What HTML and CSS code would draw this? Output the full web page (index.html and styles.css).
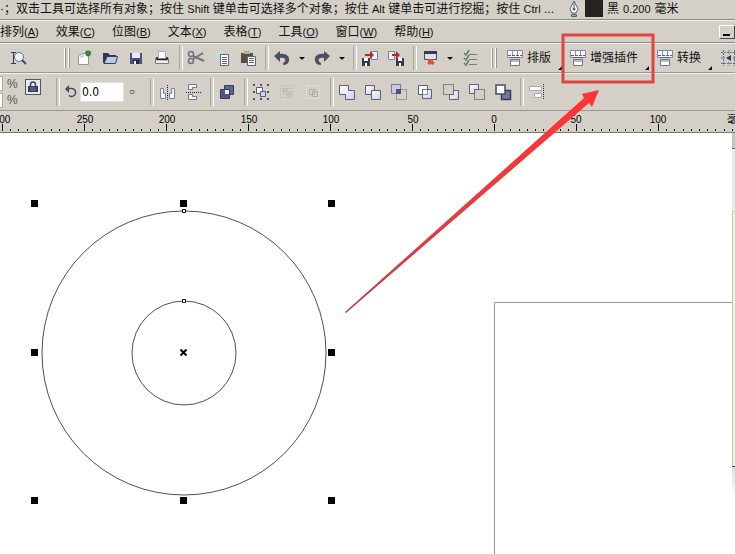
FILE: index.html
```html
<!DOCTYPE html>
<html lang="zh-CN">
<head>
<meta charset="utf-8">
<title>绘图窗口</title>
<link rel="stylesheet" href="styles.css">
</head>
<body>
<svg class="defs" aria-hidden="true">
  <defs>
    <linearGradient id="face" x1="0" y1="0" x2="1" y2="1"><stop offset="0" stop-color="#fff"/><stop offset="1" stop-color="#ccd0e6"/></linearGradient>
    <symbol id="macro" viewBox="0 0 18 18">
      <path d="M1.500 1.500h15v7h-15z" fill="#f6f6fb" stroke="#8488a0"/>
      <path d="M6.500 2v4M11.500 2v4" stroke="#8a8ea6"/>
      <path d="M2 6.500h14" stroke="#555b7a" stroke-dasharray="3 1"/>
      <path d="M4 8.500h10" stroke="#5d627e"/>
      <path d="M4.500 10.500h9v6h-9z" fill="#fff" stroke="#70748c"/>
      <path d="M5 11h8v2H5z" fill="#b9bccb"/>
    </symbol>
  </defs>
</svg>
<div class="app">
  <header class="status">
    <span class="hint">·；双击工具可选择所有对象；按住 <span class="latin">Shift</span> 键单击可选择多个对象；按住 <span class="latin">Alt</span> 键单击可进行挖掘；按住 <span class="latin">Ctrl</span> ...</span>
    <span class="outline">
      <svg class="pen" viewBox="0 0 12 18"><path d="M6 1L2 9l2 4h4l2-4z" fill="#fff" stroke="#596078"/><path d="M6 2v7" stroke="#596078"/><circle cx="6" cy="9" r="1.500" fill="#596078"/><path d="M3.500 14.500h5v2h-5z" fill="#8ba0cc" stroke="#596078"/></svg>
      <span class="swatch"></span><span>黑</span><span class="latin">0.200</span><span>毫米</span>
    </span>
  </header>

  <nav class="menu">
    <button>排列<span class="latin">(<u>A</u>)</span></button><button>效果<span class="latin">(<u>C</u>)</span></button><button>位图<span class="latin">(<u>B</u>)</span></button><button>文本<span class="latin">(<u>X</u>)</span></button><button>表格<span class="latin">(<u>T</u>)</span></button><button>工具<span class="latin">(<u>O</u>)</span></button><button>窗口<span class="latin">(<u>W</u>)</span></button><button>帮助<span class="latin">(<u>H</u>)</span></button>
    <button class="minimize" aria-label="最小化"></button>
  </nav>

  <div class="bar standard">
    <button class="tool zoom" aria-label="缩放"><svg viewBox="0 0 18 18"><path d="M2 3.500h5M2 14.500h5M4.500 4v10" stroke="#333a50" fill="none"/><circle cx="10" cy="8" r="4.500" fill="#eef2fa" stroke="#6c7184"/><path d="M13 11l4 4" stroke="#444a5c" stroke-width="2"/></svg></button>
    <span class="grip"></span>
    <button class="tool" aria-label="新建"><svg viewBox="0 0 18 18"><path d="M3.500 7.500l4-3h6v11h-10z" fill="#fff" stroke="#8f94a0"/><path d="M5 8h3V5" fill="none" stroke="#aeb2bd"/><path d="M10 3c2-2 6-2 6 1s-2 4-5 3z" fill="#358b35"/></svg></button>
    <button class="tool" aria-label="打开"><svg viewBox="0 0 18 18"><path d="M2 14V4h5l2 2h6v3" fill="#30374f"/><path d="M3 14.500l3-7h10.500l-2 7z" fill="#b8cde3" stroke="#35405e"/></svg></button>
    <button class="tool" aria-label="保存"><svg viewBox="0 0 18 18"><path d="M3 4h12v11H3z" fill="#4c517c"/><path d="M5 4h8v5H5z" fill="#e8ebf6"/><path d="M6 11h6v4H6z" fill="#242a45"/><path d="M7 12h2v3H7z" fill="#fff"/></svg></button>
    <button class="tool" aria-label="打印"><svg viewBox="0 0 18 18"><path d="M2.500 9.500h13v5h-13z" fill="#efefea" stroke="#777b85"/><path d="M5.500 2.500h7v7h-7z" fill="#fff" stroke="#aaa"/><path d="M4 8v2.500h10V8" fill="none" stroke="#222" stroke-width="1.500"/></svg></button>
    <span class="sep"></span>
    <button class="tool" aria-label="剪切"><svg viewBox="0 0 18 18" fill="none" stroke="#70737e"><circle cx="4" cy="5" r="2.500" stroke-width="1.500"/><circle cx="4" cy="12" r="2.500" stroke-width="1.500"/><path d="M6 7l11 5M6 10l10-6" stroke-width="2"/></svg></button>
    <button class="tool" aria-label="复制"><svg viewBox="0 0 18 18"><path d="M3 3h8v9H3z" fill="#c5d9dd"/><path d="M7.500 5.500h8v11h-8z" fill="#fff" stroke="#5c6480"/><path d="M9 8.500h5M9 10.500h5M9 12.500h5M9 14.500h5" stroke="#5a6788"/></svg></button>
    <button class="tool" aria-label="粘贴"><svg viewBox="0 0 18 18"><path d="M2 4h12v10H2z" fill="#5c4e42"/><path d="M5 2h6v3H5z" fill="#b8ad8c"/><path d="M8.500 7.500h8v9h-8z" fill="#fff" stroke="#5c6480"/><path d="M10 9.500h5M10 11.500h5M10 13.500h5" stroke="#5a6788"/></svg></button>
    <span class="sep"></span>
    <button class="tool" aria-label="撤消"><svg viewBox="0 0 18 18"><path d="M1 7l6-5v3c6-1 10 2 9 7-1 3-3 4-6 4v-2c4-2 3-6-3-5v4z" fill="#4b5163"/></svg></button>
    <button class="drop" aria-label="撤消列表"></button>
    <button class="tool" aria-label="重做"><svg viewBox="0 0 18 18"><path d="M17 7l-6-5v3C5 4 1 7 2 12c1 3 3 4 6 4v-2C4 12 5 8 11 9v4z" fill="#4b5163"/></svg></button>
    <button class="drop" aria-label="重做列表"></button>
    <span class="sep"></span>
    <button class="tool" aria-label="导入"><svg viewBox="0 0 18 18"><path d="M10.500 2.500h6v8h-6z" fill="#edf1f8" stroke="#7d8498"/><path d="M4 5h5V2l4 4-4 4V7H4z" fill="#bd2430"/><path d="M1 9h8v8H1z" fill="#333a58"/><path d="M3 9h4v3H3zM4 14h2v3H4z" fill="#fff"/></svg></button>
    <button class="tool" aria-label="导出"><svg viewBox="0 0 18 18"><path d="M1.500 2.500h6v8h-6z" fill="#edf1f8" stroke="#7d8498"/><path d="M5 5h4V2l4 4-4 4V7H5z" fill="#bd2430"/><path d="M9 9h8v8H9z" fill="#333a58"/><path d="M11 9h4v3h-4zM12 14h2v3h-2z" fill="#fff"/></svg></button>
    <span class="sep"></span>
    <button class="tool" aria-label="应用程序启动器"><svg viewBox="0 0 18 18"><path d="M3.500 2.500h12v8h-12z" fill="#d9e2f2" stroke="#454b62"/><path d="M3 2h13v3H3z" fill="#343a54"/><path d="M7 10h5v3h2l-2 3-2-1-2 1-2-3h1z" fill="#e2512d"/></svg></button>
    <button class="drop" aria-label="启动器列表"></button>
    <button class="tool" aria-label="选项"><svg viewBox="0 0 18 18" fill="none"><path d="M8 5.500h8M8 10.500h8M8 15.500h8" stroke="#747983"/><path d="M3 4l2 2 3-5M3 9l2 2 3-5M3 14l2 2 3-5" stroke="#58885b" stroke-width="1.500"/></svg></button>
    <span class="grip wide"></span>
    <button class="plugin"><svg><use href="#macro"/></svg>排版</button>
    <button class="plugin"><svg><use href="#macro"/></svg>增强插件</button>
    <button class="plugin"><svg><use href="#macro"/></svg>转换</button>
    <button class="tool snap" aria-label="网格"><svg viewBox="0 0 18 18"><path d="M1 3.500h16M1 14.500h16M3.500 1v16M14.500 1v16M9 1v4M9 13v4M1 9h4M13 9h4" fill="none" stroke="#697086" stroke-dasharray="2 1"/><path d="M6 9l5-3v6z" fill="#343c58"/></svg></button>
  </div>

  <div class="bar property">
    <div class="scale"><input aria-label="水平缩放"><input aria-label="垂直缩放"></div>
    <div class="percent"><span>%</span><span>%</span></div>
    <button class="lock" aria-label="锁定比率"><svg viewBox="0 0 14 14"><path d="M4.500 7V4.500a2.500 2.500 0 0 1 5 0V7" fill="none" stroke="#42475f" stroke-width="1.500"/><path d="M2 6h10v6H2z" fill="#353a56"/><path d="M4 8h6M4 10h6" stroke="#7d83a5"/></svg></button>
    <span class="sep tall"></span>
    <label class="angle"><svg viewBox="0 0 14 14"><path d="M5 3.500h3a4 4 0 1 1-3 7" fill="none" stroke="#444b5d" stroke-width="1.500"/><path d="M1 4l4-4v8z" fill="#444b5d"/></svg><input aria-label="旋转角度" value="0.0"><span>○</span></label>
    <span class="sep tall"></span>
    <button class="tool" aria-label="水平镜像"><svg viewBox="0 0 18 18"><path d="M2.500 5.500h3v5h2v5h-5zM16.500 5.500h-3v5h-2v5h5z" fill="#f3f5fc" stroke="#7b8198"/><path d="M9.500 2v15" stroke="#222" stroke-dasharray="1 1"/></svg></button>
    <button class="tool" aria-label="垂直镜像"><svg viewBox="0 0 18 18"><path d="M4.500 1.500h8v3h-4v2h-4zM4.500 16.500h8v-3h-4v-2h-4z" fill="#f3f5fc" stroke="#70758c"/><path d="M2 9.500h15" stroke="#222" stroke-dasharray="1 1"/></svg></button>
    <span class="sep tall"></span>
    <button class="tool" aria-label="合并"><svg viewBox="0 0 18 18"><path d="M6.500 2.500h9v9h-9z" fill="#5c6696" stroke="#343b62"/><path d="M2.500 6.500h9v9h-9z" fill="#4e5788" stroke="#343b62"/><path d="M7 7h4v4H7z" fill="#edf0fb"/></svg></button>
    <span class="sep tall"></span>
    <button class="tool" aria-label="群组"><svg viewBox="0 0 18 18"><path d="M1 1h2v2H1zM8 1h2v2H8zM15 1h2v2h-2zM1 8h2v2H1zM15 8h2v2h-2zM1 15h2v2H1zM8 15h2v2H8zM15 15h2v2h-2z" fill="#4a5068"/><path d="M4.500 4.500h6v6h-6z" fill="#fff" stroke="#555d82"/><path d="M8.500 8.500h5v5h-5z" fill="#d2d8ef" stroke="#555d82"/></svg></button>
    <button class="tool faint" aria-label="取消群组"><svg viewBox="0 0 18 18"><path d="M2 2.500h14M2 5.500h14M2 8.500h14M2 11.500h14M2 14.500h14" stroke="#989894" stroke-dasharray="1 2"/><path d="M4 5h6v5H4zM9 9h5v5H9z" fill="#b8b6b1"/></svg></button>
    <button class="tool faint" aria-label="取消全部群组"><svg viewBox="0 0 18 18"><path d="M2.500 2.500h13v13h-13z" fill="none" stroke="#f5f3ed" stroke-dasharray="2 1"/><path d="M5.500 6.500h5v5h-5zM8.500 8.500h5v5h-5z" fill="#d8d5ce" stroke="#96958f"/></svg></button>
    <span class="sep tall"></span>
    <button class="tool" aria-label="焊接"><svg viewBox="0 0 18 18"><path d="M1.500 2.500h9v5h6v9h-9v-5h-6z" fill="url(#face)" stroke="#5b5e7d"/></svg></button>
    <button class="tool" aria-label="修剪"><svg viewBox="0 0 18 18" fill="url(#face)" stroke="#5b5e7d"><path d="M1.500 2.500h9v9h-9z"/><path d="M7.500 7.500h9v9h-9z"/></svg></button>
    <button class="tool" aria-label="相交"><svg viewBox="0 0 18 18"><path d="M1.500 1.500h9v9h-9z" fill="#c8cce0" stroke="#777a95"/><path d="M6.500 6.500h10v10h-10z" fill="none" stroke="#666" stroke-dasharray="1 1"/><path d="M6 6h5v5H6z" fill="#4c5270"/></svg></button>
    <button class="tool" aria-label="简化"><svg viewBox="0 0 18 18"><path d="M2.500 2.500h9v9h-9z" fill="#fff" stroke="#5b5e7d"/><path d="M6.500 6.500h9v9h-9z" fill="url(#face)" stroke="#5b5e7d"/><path d="M6.500 6.500h5v5h-5z" fill="#fff" stroke="#333" stroke-dasharray="1 1"/></svg></button>
    <button class="tool" aria-label="移除后面对象"><svg viewBox="0 0 18 18"><path d="M11.500 7.500h5v9h-9v-5h4z" fill="url(#face)" stroke="#5b5e7d"/><path d="M1.500 1.500h10v10h-10z" fill="#d4d0c8" stroke="#333" stroke-dasharray="1 1"/></svg></button>
    <button class="tool" aria-label="移除前面对象"><svg viewBox="0 0 18 18"><path d="M1.500 1.500h9v5h-4v4h-5z" fill="url(#face)" stroke="#5b5e7d"/><path d="M6.500 6.500h10v10h-10z" fill="#d4d0c8" stroke="#333" stroke-dasharray="1 1"/></svg></button>
    <button class="tool" aria-label="边界"><svg viewBox="0 0 18 18"><path d="M7.500 7.500h9v9h-9z" fill="#727b9c" stroke="#343b58" stroke-width="1.500"/><path d="M2 2h9v9H2z" fill="#fff" stroke="#444b69" stroke-width="1.500"/></svg></button>
    <span class="sep tall"></span>
    <button class="tool" aria-label="对齐和分布"><svg viewBox="0 0 18 18"><path d="M1.500 3.500h12v4h-12zM6.500 10.500h7v4h-7z" fill="#fff" stroke="#a4a9bf"/><path d="M15.500 1v16" stroke="#333" stroke-dasharray="1 1"/></svg></button>
  </div>

  <svg class="ruler">
    <defs><pattern id="ticks" x="2" y="0" width="82" height="22" patternUnits="userSpaceOnUse">
      <path d="M0 13h1v7H0zM8 18h1v2H8zM16 18h1v2h-1zM25 18h1v2h-1zM33 18h1v2h-1zM41 18h1v2h-1zM49 18h1v2h-1zM57 18h1v2h-1zM66 18h1v2h-1zM74 18h1v2h-1z"/>
    </pattern></defs>
    <rect width="100%" height="22" fill="url(#ticks)"/>
    <g text-anchor="middle"><text x="2" y="12">300</text><text x="85" y="12">250</text><text x="167" y="12">200</text><text x="249" y="12">150</text><text x="331" y="12">100</text><text x="413" y="12">50</text><text x="494" y="12">0</text><text x="576" y="12">50</text><text x="658" y="12">100</text></g>
    <text x="727" y="12">毫米</text>
  </svg>

  <main class="workspace">
    <svg class="drawing">
      <path d="M494.500 600V169.500H732" fill="none" stroke="#969696"/>
      <g fill="none" stroke="#505050"><circle cx="184" cy="220" r="142"/><circle cx="184" cy="220" r="52"/></g>
      <g fill="#fff" stroke="#111"><path d="M182.500 76.500h3v3h-3zM182.500 166.500h3v3h-3z"/></g>
      <path d="M31 67h7v7h-7zM180 67h7v7h-7zM328 67h7v7h-7zM31 216h7v7h-7zM328 216h7v7h-7zM31 364h7v7h-7zM180 364h7v7h-7zM328 364h7v7h-7z"/>
      <path d="M180.500 216.500l6 6M186.500 216.500l-6 6" stroke="#000" stroke-width="2"/>
    </svg>
    <div class="edge"><span class="cap"></span><span class="track"></span><span class="thumb"></span><span class="tail"></span></div>
  </main>

  <svg class="callout" aria-hidden="true">
    <defs><linearGradient id="shaft" x1="0" y1="1" x2="1" y2="0"><stop offset="0" stop-color="#b84048"/><stop offset=".5" stop-color="#e83c40"/><stop offset="1" stop-color="#ff3434"/></linearGradient></defs>
    <rect x="563" y="35" width="90" height="47" fill="none" stroke="#de4444" stroke-width="3"/>
    <path d="M345 312L584 98l-2-4 17-4-7 17-3-4L346 313z" fill="url(#shaft)"/>
  </svg>
</div>
</body>
</html>
```

FILE: styles.css
```css
* { box-sizing: border-box; }

body {
  margin: 0;
  background: #fff;
  color: #111;
  font: 12px/16px "Liberation Sans", "Noto Sans CJK SC", sans-serif;
}

button {
  padding: 0;
  border: 0;
  background: none;
  color: inherit;
  font: inherit;
}

svg { display: block; }
.defs { position: absolute; width: 0; height: 0; }

.app {
  position: relative;
  display: flex;
  flex-direction: column;
  min-height: 100vh;
  overflow: hidden;
  background: #d4d0c8;
}

.latin { font-size: 11px; }

.status {
  display: flex;
  height: 20px;
  border-bottom: 1px solid #8c8983;
  line-height: 18px;
  white-space: nowrap;
}
.hint { flex: none; width: 567px; }
.outline { display: flex; gap: 4px; }
.pen { width: 14px; height: 18px; }
.swatch { width: 18px; height: 17px; background: #25221f; }

.menu {
  display: flex;
  align-items: center;
  gap: 17px;
  height: 23px;
  border-top: 1px solid #f4f2ec;
  border-bottom: 1px solid #8c8983;
  line-height: 18px;
  white-space: nowrap;
}
.minimize {
  flex: none;
  width: 16px;
  height: 14px;
  margin-left: auto;
  border: 1px solid #fff;
  border-right-color: #444;
  border-bottom-color: #444;
}
.minimize::after {
  content: "";
  display: block;
  width: 7px;
  height: 2px;
  margin: 7px 0 0 3px;
  background: #000;
}

.bar {
  display: flex;
  align-items: center;
  border-top: 1px solid #f4f2ec;
  border-bottom: 1px solid #9b9891;
}
.bar > * { flex: none; }
.standard { height: 30px; }
.property { height: 38px; }

.tool { width: 26px; height: 26px; }
.tool svg { width: 18px; height: 18px; margin: 0 auto; }
.zoom { margin-left: 5px; }
.faint { opacity: .6; }

.sep { position: relative; width: 8px; height: 24px; }
.sep::after {
  content: "";
  display: block;
  width: 2px;
  height: 100%;
  margin-left: 4px;
  border-left: 1px solid #aaa79f;
  border-right: 1px solid #fff;
}
.tall { height: 28px; }

.grip {
  width: 5px;
  height: 20px;
  margin: 0 2px 0 33px;
  border: 1px solid #fff;
  border-width: 0 1px;
  box-shadow: 1px 0 #99968f, inset 1px 0 #99968f;
}
.wide { margin: 0 7px 0 8px; }

.drop { width: 14px; height: 26px; }
.drop::after {
  content: "";
  display: block;
  width: 0;
  margin: 0 auto;
  border: 3px solid transparent;
  border-top-color: #111;
  border-bottom: 0;
}

.plugin {
  position: relative;
  display: flex;
  align-items: center;
  gap: 3px;
  height: 28px;
  padding: 0 15px 0 3px;
  white-space: nowrap;
}
.plugin svg { width: 18px; height: 18px; }
.plugin::after {
  content: "";
  position: absolute;
  right: 4px;
  bottom: 2px;
  border: 2px solid #111;
  border-top-color: transparent;
  border-left-color: transparent;
}

.scale { display: flex; flex-direction: column; gap: 2px; width: 3px; }
.scale input {
  width: 3px;
  height: 15px;
  padding: 0;
  border: 1px solid #aaa;
  border-left: 0;
  background: #fff;
}
.percent { width: 22px; padding-left: 4px; color: #555; }
.percent span { display: block; }
.lock {
  width: 14px;
  height: 14px;
  margin: 0 12px 10px 1px;
  background: #e6e8f2;
  outline: 1px solid #555;
}
.lock svg { width: 14px; height: 14px; }
.angle { display: flex; align-items: center; gap: 2px; padding: 0 8px 0 4px; }
.angle svg { width: 14px; height: 14px; }
.angle input {
  width: 44px;
  height: 20px;
  padding: 0 1px;
  border: 1px solid #e4e1da;
  background: #fff;
  font: 12px "DejaVu Sans Condensed", sans-serif;
}
.angle span { width: 12px; text-align: center; font-size: 10px; }

.ruler {
  width: 100%;
  height: 22px;
  border-bottom: 1px solid #77736d;
  font: 10px "Liberation Sans", "Noto Sans CJK SC", sans-serif;
}

.workspace {
  display: flex;
  flex: 1;
  background: #fff;
}
.drawing { flex: 1; min-width: 0; overflow: visible; }
.edge { display: flex; flex-direction: column; width: 3px; }
.cap { height: 16px; border-bottom: 1px solid #666; background: #c5c4c0; }
.track { height: 62px; background: #eceae5; }
.thumb { height: 256px; border: 1px solid #cbc5ad; border-bottom-color: #333; border-right: 0; background: #f3f0e5; }
.tail { height: 30px; background: linear-gradient(#ddd, #fff); }

.callout {
  position: absolute;
  inset: 0;
  width: 100%;
  height: 100%;
  pointer-events: none;
}
```
